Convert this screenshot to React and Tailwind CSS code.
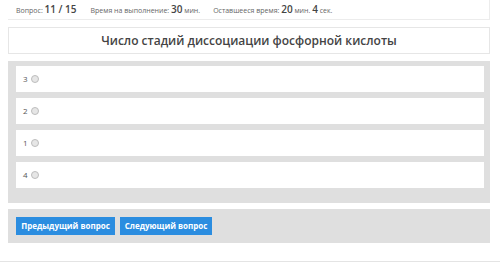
import React from "react";

const answers = ["3", "2", "1", "4"];

export default function App() {
  return (
    <div className="w-[500px] h-[262px] bg-white overflow-hidden border-b border-[#e4e4e4]" style={{ fontFamily: "'Open Sans', 'DejaVu Sans', sans-serif" }}>
      <div className="pl-2 pr-[10px]">
        <div className="h-[20px] border-b border-r border-[#ececec] flex items-center pl-[8px] text-[7px] text-[#666]">
          <span>
            Вопрос: <b className="text-[10px] text-[#444] font-semibold">11 / 15</b>
          </span>
          <span className="ml-[14px]">
            Время на выполнение: <b className="text-[10px] text-[#444] font-semibold">30</b> мин.
          </span>
          <span className="ml-[13px]">
            Оставшееся время: <b className="text-[10px] text-[#444] font-semibold">20</b> мин. <b className="text-[10px] text-[#444] font-semibold">4</b> сек.
          </span>
        </div>

        <div className="mt-[7px] h-[27px] border border-[#e6e6e6] flex items-center justify-center text-[12px] font-semibold text-[#444]">
          Число стадий диссоциации фосфорной кислоты
        </div>

        <div className="mt-[7px] bg-[#dfdfdf] pl-2 pr-[6px] pt-[5px] pb-[15px] flex flex-col gap-[6px]">
          {answers.map((a) => (
            <label key={a} className="h-[26px] bg-white flex items-center pl-[7px] gap-[3px] text-[8px] text-[#555]">
              <span>{a}</span>
              <span className="w-[8px] h-[8px] rounded-full border border-[#bdbdbd] bg-[#e6e6e6]" />
            </label>
          ))}
        </div>

        <div className="mt-[6px] h-[34px] bg-[#dfdfdf] flex items-center pl-2 gap-[5px]">
          <button className="h-[18px] w-[99px] bg-[#2b8de0] text-white text-[8px] font-bold">Предыдущий вопрос</button>
          <button className="h-[18px] w-[92px] bg-[#2b8de0] text-white text-[8px] font-bold">Следующий вопрос</button>
        </div>
      </div>
    </div>
  );
}
